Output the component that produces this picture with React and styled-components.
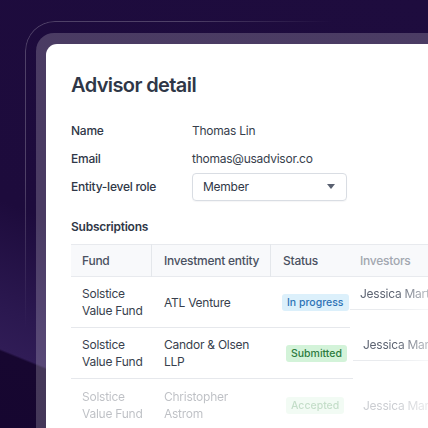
import React from "react";
import styled, { createGlobalStyle } from "styled-components";

const Global = createGlobalStyle`
  html, body {
    margin: 0;
    padding: 0;
    background: #1c0b3b;
  }
  body {
    font-family: Inter, "Noto Sans", "Liberation Sans", sans-serif;
    -webkit-font-smoothing: antialiased;
  }
`;

const Stage = styled.div`
  width: 428px;
  height: 428px;
  overflow: hidden;
  box-sizing: border-box;
  padding: 21px 0 0 25px;
  background: linear-gradient(
    202deg,
    #1e0c3e 0%,
    #1d0b3c 62%,
    #2b1850 80%,
    #301c56 86.8%,
    #170730 87.2%,
    #160630 100%
  );
`;

const Outline = styled.div`
  position: relative;
  width: 420px;
  height: 420px;
  box-sizing: border-box;
  padding: 12px 0 0 11px;
  &::before {
    content: "";
    position: absolute;
    inset: 0;
    border: 1px solid rgba(255, 255, 255, 0.22);
    border-right: none;
    border-bottom: none;
    border-radius: 30px 0 0 0;
    -webkit-mask-image: radial-gradient(circle at 20px 20px, #000 0, #000 140px, transparent 290px);
    mask-image: radial-gradient(circle at 20px 20px, #000 0, #000 140px, transparent 290px);
    pointer-events: none;
  }
`;

const Frame = styled.div`
  width: 420px;
  height: 420px;
  box-sizing: border-box;
  padding: 11px 0 0 10px;
  background: rgba(255, 255, 255, 0.2);
  border-radius: 18px 0 0 0;
`;

const Card = styled.div`
  width: 420px;
  height: 420px;
  box-sizing: border-box;
  padding: 29px 0 0 25px;
  background: #ffffff;
  border-radius: 11px 0 0 0;
  color: #2f3747;
  font-size: 12px;
  letter-spacing: -0.25px;
`;

const Title = styled.h1`
  margin: 0 0 19px;
  font-size: 20px;
  line-height: 24px;
  font-weight: 600;
  color: #2f3747;
  letter-spacing: -0.6px;
`;

const Details = styled.div`
  display: grid;
  grid-template-columns: 121px 155px;
  grid-auto-rows: 28px;
  align-items: center;
`;

const Label = styled.div`
  font-size: 12px;
  font-weight: 500;
  color: #2f3747;
`;

const Value = styled.div`
  font-size: 12px;
  color: #373e4c;
`;

const Select = styled.div`
  height: 28px;
  box-sizing: border-box;
  margin-top: 1px;
  display: flex;
  align-items: center;
  justify-content: space-between;
  padding: 0 11px 0 10px;
  border: 1px solid #d9dde3;
  border-radius: 4px;
  font-size: 12px;
  color: #2f3747;
  box-shadow: 0 1px 1px rgba(16, 24, 40, 0.04);
`;

const Caret = styled.span`
  width: 0;
  height: 0;
  border-left: 4px solid transparent;
  border-right: 4px solid transparent;
  border-top: 5px solid #596070;
`;

const Section = styled.h2`
  margin: 17px 0 7px;
  font-size: 12px;
  line-height: 20px;
  font-weight: 600;
  color: #2f3747;
`;

const Table = styled.div`
  width: 380px;
`;

const Head = styled.div`
  display: grid;
  grid-template-columns: 81px 119px 79px 1fr;
  height: 33px;
  box-sizing: border-box;
  border-top: 1px solid #e8eaee;
  border-bottom: 1px solid #e8eaee;
  background: #f8f9fb;
  align-items: center;
`;

const HeadCell = styled.div`
  position: relative;
  padding-left: ${(p) => p.$pad}px;
  font-size: 12px;
  font-weight: 500;
  white-space: nowrap;
  color: ${(p) => (p.$dim ? "#a2a7b0" : "#4a5161")};
  ${(p) =>
    p.$divider &&
    `&::after {
      content: "";
      position: absolute;
      right: 0;
      top: -9px;
      bottom: -9px;
      width: 1px;
      background: #e4e7eb;
    }`}
`;

const Body = styled.div`
  display: flex;
`;

const Rows = styled.div`
  width: 279px;
  flex: none;
`;

const Row = styled.div`
  display: grid;
  grid-template-columns: 81px 119px 79px;
  height: 51px;
  box-sizing: border-box;
  border-bottom: ${(p) => (p.$last ? "none" : "1px solid #e6e8ec")};
  margin-right: ${(p) => p.$over}px;
  align-items: center;
  opacity: ${(p) => (p.$faded ? 0.32 : 1)};
`;

const Cell = styled.div`
  padding-left: ${(p) => p.$pad}px;
  font-size: 12px;
  line-height: 17px;
  color: #383f4d;
`;

const Badge = styled.span`
  display: inline-block;
  margin-left: ${(p) => p.$inset}px;
  padding: 0 5px;
  height: 17px;
  line-height: 17px;
  border-radius: 3px;
  font-size: 10.5px;
  font-weight: 500;
  letter-spacing: 0;
  white-space: nowrap;
  background: ${(p) => p.$bg};
  color: ${(p) => p.$fg};
`;

const Investors = styled.div`
  flex: 1;
  display: flex;
  flex-direction: column;
  -webkit-mask-image: linear-gradient(to right, #000 0, #000 45px, rgba(0, 0, 0, 0.45) 75px, rgba(0, 0, 0, 0.35) 100%);
  mask-image: linear-gradient(to right, #000 0, #000 45px, rgba(0, 0, 0, 0.45) 75px, rgba(0, 0, 0, 0.35) 100%);
`;

const InvestorCell = styled.div`
  height: ${(p) => p.$h}px;
  box-sizing: border-box;
  padding: ${(p) => p.$top}px 0 0 10px;
  margin-left: ${(p) => p.$shift}px;
  border-bottom: ${(p) => (p.$line ? "1px solid #e9ebee" : "none")};
  font-size: 12px;
  line-height: 17px;
  color: #5d6472;
  white-space: nowrap;
  opacity: ${(p) => (p.$faded ? 0.32 : 1)};
`;

const subscriptions = [
  {
    fund: ["Solstice", "Value Fund"],
    entity: ["ATL Venture"],
    status: "In progress",
    bg: "#dcf0fb",
    fg: "#2e73b6",
    inset: 0,
    over: 0,
  },
  {
    fund: ["Solstice", "Value Fund"],
    entity: ["Candor & Olsen", "LLP"],
    status: "Submitted",
    bg: "#d3f3d9",
    fg: "#2c7b3e",
    inset: 4,
    over: -3,
  },
  {
    fund: ["Solstice", "Value Fund"],
    entity: ["Christopher", "Astrom"],
    status: "Accepted",
    bg: "#d9f3de",
    fg: "#4b9a5a",
    inset: 4,
    over: 0,
    faded: true,
    last: true,
  },
];

const investorCells = [
  { h: 33, top: 8, shift: 0, line: true },
  { h: 51, top: 26, shift: 3, line: true },
  { h: 60, top: 36, shift: 3, line: false, faded: true },
];

const Lines = ({ items }) =>
  items.map((t, i) => <div key={i}>{t}</div>);

export default function App() {
  return (
    <>
      <Global />
      <Stage>
        <Outline>
          <Frame>
            <Card>
              <Title>Advisor detail</Title>
              <Details>
                <Label>Name</Label>
                <Value>Thomas Lin</Value>
                <Label>Email</Label>
                <Value>thomas@usadvisor.co</Value>
                <Label>Entity-level role</Label>
                <Select>
                  <span>Member</span>
                  <Caret />
                </Select>
              </Details>

              <Section>Subscriptions</Section>
              <Table>
                <Head>
                  <HeadCell $pad={11} $divider>Fund</HeadCell>
                  <HeadCell $pad={12} $divider>Investment entity</HeadCell>
                  <HeadCell $pad={12}>Status</HeadCell>
                  <HeadCell $pad={10} $dim>Investors</HeadCell>
                </Head>
                <Body>
                  <Rows>
                    {subscriptions.map((s, i) => (
                      <Row key={i} $faded={s.faded} $last={s.last} $over={s.over}>
                        <Cell $pad={11}>
                          <Lines items={s.fund} />
                        </Cell>
                        <Cell $pad={12}>
                          <Lines items={s.entity} />
                        </Cell>
                        <Cell $pad={11}>
                          <Badge $bg={s.bg} $fg={s.fg} $inset={s.inset}>
                            {s.status}
                          </Badge>
                        </Cell>
                      </Row>
                    ))}
                  </Rows>
                  <Investors>
                    {investorCells.map((c, i) => (
                      <InvestorCell
                        key={i}
                        $h={c.h}
                        $top={c.top}
                        $shift={c.shift}
                        $line={c.line}
                        $faded={c.faded}
                      >
                        Jessica Martinez
                      </InvestorCell>
                    ))}
                  </Investors>
                </Body>
              </Table>
            </Card>
          </Frame>
        </Outline>
      </Stage>
    </>
  );
}
